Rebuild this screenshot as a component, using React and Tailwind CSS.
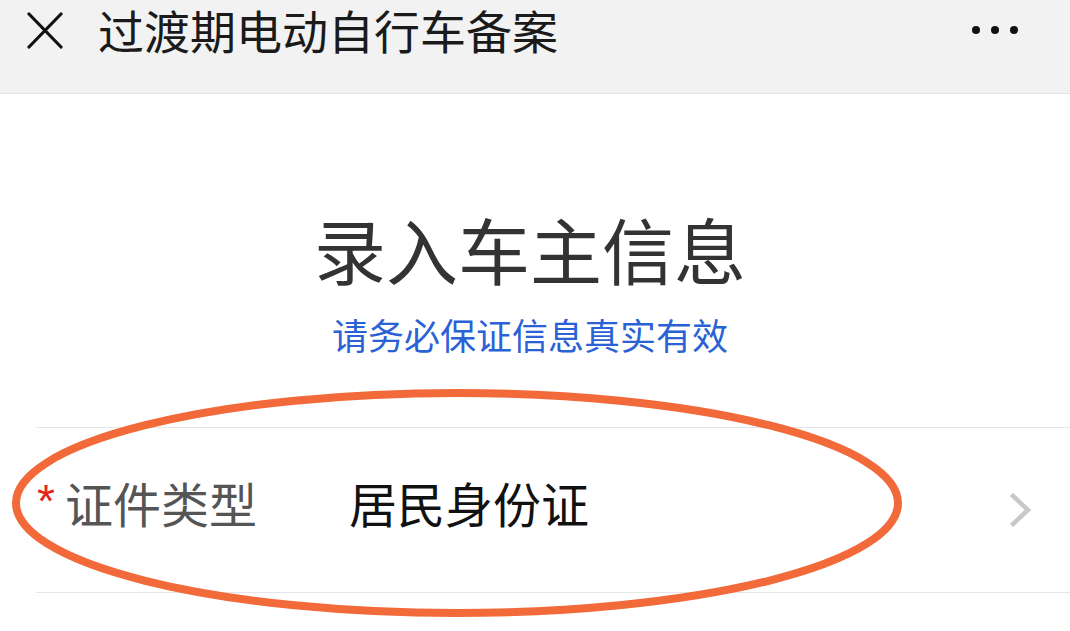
export default function App() {
  const font = { fontFamily: '"Noto Sans CJK SC", "Noto Sans", sans-serif' };
  return (
    <div className="relative w-[1070px] h-[631px] overflow-hidden bg-white" style={font}>
      <div className="h-[94px] bg-[#f2f2f2] border-b border-[#e4e4e4]">
        <div className="h-[60px] flex items-center">
          <svg className="ml-[27px] shrink-0" width="36" height="37" viewBox="0 0 36 37">
            <path d="M2 2 L34 35 M34 2 L2 35" stroke="#111" strokeWidth="3.2" strokeLinecap="round" fill="none" />
          </svg>
          <div className="ml-[35px] text-[46px] leading-[1.25] text-[#1a1a1a] whitespace-nowrap">过渡期电动自行车备案</div>
          <div className="ml-auto mr-[52px] flex items-center gap-[11px]">
            <span className="block w-[8px] h-[8px] rounded-full bg-[#111]" />
            <span className="block w-[8px] h-[8px] rounded-full bg-[#111]" />
            <span className="block w-[8px] h-[8px] rounded-full bg-[#111]" />
          </div>
        </div>
      </div>

      <div className="flex flex-col items-center pr-[10px]">
        <div className="mt-[118px] h-[72px] text-[72px] leading-none text-[#333333] whitespace-nowrap">录入车主信息</div>
        <div className="mt-[32px] h-[36px] text-[36px] leading-none text-[#2a62d6] whitespace-nowrap">请务必保证信息真实有效</div>
      </div>

      <div className="mt-[75px] ml-[36px] h-[166px] border-t border-b border-[#e6e6e6] flex items-center">
        <span className="mb-[18px] ml-[1px] text-[46px] leading-none text-[#e3241d]" style={{ fontFamily: '"Liberation Sans", sans-serif' }}>*</span>
        <span className="mb-[14px] ml-[10px] text-[48px] leading-[1.2] text-[#555555] whitespace-nowrap">证件类型</span>
        <span className="mb-[14px] ml-[92px] text-[48px] leading-[1.2] text-[#111111] whitespace-nowrap">居民身份证</span>
        <svg className="ml-auto mr-[38px]" width="22" height="34" viewBox="0 0 22 34">
          <path d="M3 3 L18 17 L3 31" stroke="#c8c8c8" strokeWidth="4.5" fill="none" strokeLinecap="square" />
        </svg>
      </div>

      <svg className="absolute top-0 left-0 pointer-events-none" width="1070" height="631" viewBox="0 0 1070 631">
        <ellipse cx="457" cy="503" rx="441" ry="110" fill="none" stroke="#f2693a" strokeWidth="8" />
      </svg>
    </div>
  );
}
